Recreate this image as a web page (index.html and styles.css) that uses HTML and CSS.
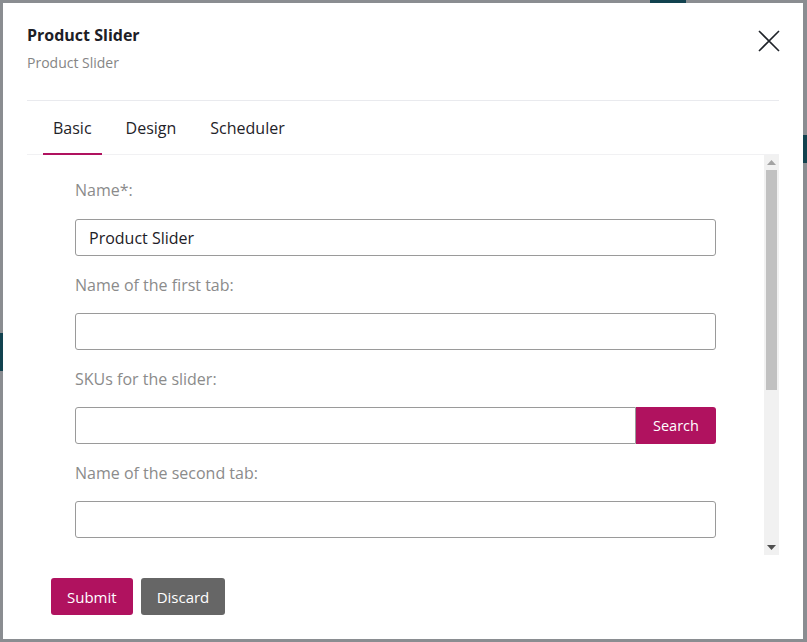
FILE: index.html
```html
<!DOCTYPE html>
<html>
<head>
<meta charset="utf-8">
<link rel="stylesheet" href="styles.css">
</head>
<body>
<div class="page">
  <div class="bg-frag bg-top"></div>
  <div class="bg-frag bg-left"></div>
  <div class="bg-frag bg-right"></div>
  <div class="modal">
    <div class="modal-header">
      <div class="titles">
        <div class="title">Product Slider</div>
        <div class="subtitle">Product Slider</div>
      </div>
      <button class="close" aria-label="Close">
        <svg width="22" height="22" viewBox="0 0 22 22"><path d="M1 1 L21 21 M21 1 L1 21" stroke="#1f2329" stroke-width="1.6" fill="none"/></svg>
      </button>
    </div>
    <div class="tabs">
      <div class="tab active">Basic</div>
      <div class="tab">Design</div>
      <div class="tab">Scheduler</div>
    </div>
    <div class="body">
      <div class="scroll">
        <div class="field">
          <label class="label">Name*:</label>
          <input class="input" type="text" value="Product Slider">
        </div>
        <div class="field">
          <label class="label">Name of the first tab:</label>
          <input class="input" type="text">
        </div>
        <div class="field">
          <label class="label">SKUs for the slider:</label>
          <div class="group">
            <input class="input" type="text">
            <button class="btn btn-pink">Search</button>
          </div>
        </div>
        <div class="field">
          <label class="label">Name of the second tab:</label>
          <input class="input" type="text">
        </div>
      </div>
      <div class="scrollbar">
        <div class="sb-btn">
          <svg width="9" height="5" viewBox="0 0 9 5"><polygon points="0,5 9,5 4.5,0" fill="#a3a3a3"/></svg>
        </div>
        <div class="sb-track"><div class="sb-thumb"></div></div>
        <div class="sb-btn">
          <svg width="9" height="5" viewBox="0 0 9 5"><polygon points="0,0 9,0 4.5,5" fill="#505050"/></svg>
        </div>
      </div>
    </div>
    <div class="footer">
      <button class="btn btn-pink btn-lg">Submit</button>
      <button class="btn btn-gray btn-lg">Discard</button>
    </div>
  </div>
</div>
</body>
</html>
```
FILE: styles.css
```css
* { box-sizing: border-box; }
html, body { margin: 0; padding: 0; }
body {
  width: 807px;
  height: 642px;
  overflow: hidden;
  font-family: "Open Sans", "Noto Sans", sans-serif;
  background: #8a8d91;
}
.page {
  position: relative;
  width: 807px;
  height: 642px;
  padding: 3px;
  display: flex;
  align-items: flex-start;
}
.bg-frag { position: absolute; background: #12424f; }
.bg-top { left: 650px; top: 0; width: 36px; height: 3px; }
.bg-left { left: 0; top: 333px; width: 3px; height: 38px; }
.bg-right { right: 0; top: 135px; width: 4px; height: 28px; }
.modal {
  position: relative;
  width: 800px;
  height: 636px;
  background: #fff;
  display: flex;
  flex-direction: column;
  padding: 0 24px 24px;
}
.modal-header {
  display: flex;
  justify-content: space-between;
  align-items: flex-start;
  padding-top: 21px;
  height: 98px;
  border-bottom: 1px solid #e9eaee;
}
.title {
  font-size: 16px;
  font-weight: 700;
  line-height: 22px;
  color: #1d2026;
}
.subtitle {
  font-size: 14px;
  line-height: 20px;
  margin-top: 7px;
  color: #858585;
}
.close {
  border: 0;
  background: none;
  padding: 0;
  margin-top: 6px;
  margin-right: -1px;
  width: 22px;
  height: 22px;
  cursor: pointer;
}
.close svg { display: block; }
.tabs {
  display: flex;
  padding-left: 16px;
  border-bottom: 1px solid #f1f1f3;
}
.tab {
  font-size: 16px;
  line-height: 24px;
  padding: 15px 10px 13px;
  margin-right: 14px;
  color: #1f2329;
  border-bottom: 2px solid transparent;
  margin-bottom: -1px;
}
.tab.active { border-bottom-color: #b0125f; }
.body {
  flex: 1;
  min-height: 0;
  display: flex;
}
.scroll {
  flex: 1;
  overflow: hidden;
  padding: 25px 48px 0;
}
.scrollbar {
  width: 15px;
  background: #f1f1f1;
  display: flex;
  flex-direction: column;
}
.sb-btn {
  height: 15px;
  display: flex;
  align-items: center;
  justify-content: center;
}
.sb-btn svg { display: block; }
.sb-track { flex: 1; }
.sb-thumb {
  height: 220px;
  margin: 0 2px;
  background: #c1c1c1;
}
.field { margin-bottom: 18px; }
.field + .field .label { padding-top: 1px; margin-bottom: 18px; }
.label {
  display: block;
  font-size: 16px;
  line-height: 20px;
  color: #8b8b8b;
  margin-bottom: 19px;
}
.input {
  display: block;
  width: 100%;
  height: 37px;
  border: 1px solid #9a9a9a;
  border-radius: 3px;
  padding: 0 13px;
  font-family: "Open Sans", "Noto Sans", sans-serif;
  font-size: 16px;
  color: #1d2026;
  background: #fff;
  outline: none;
}
.group { display: flex; }
.group .input {
  flex: 1;
  border-radius: 3px 0 0 3px;
}
.btn {
  border: 0;
  font-family: "Open Sans", "Noto Sans", sans-serif;
  font-size: 14px;
  color: #fff;
  border-radius: 3px;
  height: 37px;
  cursor: pointer;
}
.group .btn { width: 80px; border-radius: 0 3px 3px 0; font-size: 14.5px; }
.btn-pink { background: #b0125f; }
.btn-gray { background: #666666; }
.footer {
  display: flex;
  gap: 8px;
  padding: 23px 0 0 24px;
}
.btn-lg { padding: 0 16px; font-size: 15px; }
```
